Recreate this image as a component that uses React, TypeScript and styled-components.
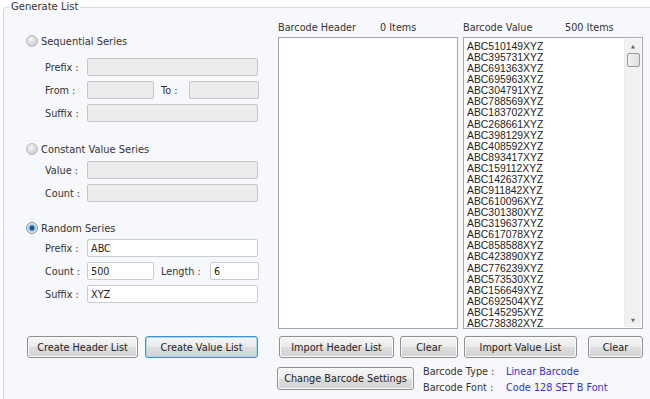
import styled, { createGlobalStyle } from 'styled-components';

const GlobalStyle = createGlobalStyle`
  html, body {
    margin: 0;
    padding: 0;
    overflow: hidden;
    background: #ffffff;
  }
  body {
    font-family: 'DejaVu Sans', Verdana, sans-serif;
    font-size: 9.7px;
    color: #333333;
  }
`;

const values = [
  'ABC510149XYZ', 'ABC395731XYZ', 'ABC691363XYZ', 'ABC695963XYZ', 'ABC304791XYZ',
  'ABC788569XYZ', 'ABC183702XYZ', 'ABC268661XYZ', 'ABC398129XYZ', 'ABC408592XYZ',
  'ABC893417XYZ', 'ABC159112XYZ', 'ABC142637XYZ', 'ABC911842XYZ', 'ABC610096XYZ',
  'ABC301380XYZ', 'ABC319637XYZ', 'ABC617078XYZ', 'ABC858588XYZ', 'ABC423890XYZ',
  'ABC776239XYZ', 'ABC573530XYZ', 'ABC156649XYZ', 'ABC692504XYZ', 'ABC145295XYZ',
  'ABC738382XYZ',
];

const App = () => {
  return (
    <>
      <GlobalStyle />
      <Frame>
        <Legend>Generate List</Legend>
        <Body>
          <LeftCol>
            <RadioRow $top={14}>
              <Radio />
              <span>Sequential Series</span>
            </RadioRow>
            <Field $top={10}>
              <FieldLabel>Prefix :</FieldLabel>
              <Input $w={172} disabled readOnly value="" />
            </Field>
            <Field $top={5}>
              <FieldLabel>From :</FieldLabel>
              <Input $w={67} disabled readOnly value="" />
              <InlineLabel $w={35}>To :</InlineLabel>
              <Input $w={70} disabled readOnly value="" />
            </Field>
            <Field $top={5}>
              <FieldLabel>Suffix :</FieldLabel>
              <Input $w={172} disabled readOnly value="" />
            </Field>

            <RadioRow $top={20}>
              <Radio />
              <span>Constant Value Series</span>
            </RadioRow>
            <Field $top={5}>
              <FieldLabel>Value :</FieldLabel>
              <Input $w={172} disabled readOnly value="" />
            </Field>
            <Field $top={5}>
              <FieldLabel>Count :</FieldLabel>
              <Input $w={172} disabled readOnly value="" />
            </Field>

            <RadioRow $top={19}>
              <Radio $checked />
              <span>Random Series</span>
            </RadioRow>
            <Field $top={4}>
              <FieldLabel>Prefix :</FieldLabel>
              <Input $w={172} readOnly value="ABC" />
            </Field>
            <Field $top={5}>
              <FieldLabel>Count :</FieldLabel>
              <Input $w={67} readOnly value="500" />
              <InlineLabel $w={56}>Length :</InlineLabel>
              <Input $w={49} readOnly value="6" />
            </Field>
            <Field $top={5}>
              <FieldLabel>Suffix :</FieldLabel>
              <Input $w={172} readOnly value="XYZ" />
            </Field>

            <ButtonRow $top={33}>
              <Btn $w={111}>Create Header List</Btn>
              <Btn $w={113} $focused>Create Value List</Btn>
            </ButtonRow>
          </LeftCol>

          <RightCol>
            <ListColumn>
              <ListHead>
                <HeadTitle>Barcode Header</HeadTitle>
                <span>0 Items</span>
              </ListHead>
              <ListBox />
              <ButtonRow $top={7}>
                <Btn $w={115}>Import Header List</Btn>
                <Btn $w={58}>Clear</Btn>
              </ButtonRow>
            </ListColumn>
            <ListColumn>
              <ListHead>
                <HeadTitle>Barcode Value</HeadTitle>
                <span>500 Items</span>
              </ListHead>
              <ListBox>
                <Items>
                  {values.map((v) => (
                    <Item key={v}>{v}</Item>
                  ))}
                </Items>
                <ScrollBar>
                  <Arrow>▲</Arrow>
                  <Thumb />
                  <Track />
                  <Arrow>▼</Arrow>
                </ScrollBar>
              </ListBox>
              <ButtonRow $top={7}>
                <Btn $w={113}>Import Value List</Btn>
                <Btn $w={55}>Clear</Btn>
              </ButtonRow>
            </ListColumn>
            <SettingsRow>
              <Btn $w={137} $h={23}>Change Barcode Settings</Btn>
              <Info>
                <InfoLine>
                  <InfoKey>Barcode Type :</InfoKey>
                  <InfoValue>Linear Barcode</InfoValue>
                </InfoLine>
                <InfoLine>
                  <InfoKey>Barcode Font :</InfoKey>
                  <InfoValue>Code 128 SET B Font</InfoValue>
                </InfoLine>
              </Info>
            </SettingsRow>
          </RightCol>
        </Body>
      </Frame>
    </>
  );
};

export default App;

const Frame = styled.fieldset`
  margin: 0 0 0 3px;
  padding: 0;
  width: 647px;
  height: 399px;
  box-sizing: border-box;
  border: 1px solid #d3dae0;
  border-right: none;
  border-bottom: none;
  border-radius: 4px 0 0 0;
  background: #f7f8fb;
`;

const Legend = styled.legend`
  margin-left: 5px;
  padding: 0 2px;
  line-height: 14px;
  font-size: 10px;
  color: #333;
`;

const Body = styled.div`
  display: grid;
  grid-template-columns: 232px 365px;
  column-gap: 20px;
  padding: 6px 0 0 22px;
`;

const LeftCol = styled.div`
  display: flex;
  flex-direction: column;
`;

const RadioRow = styled.div<{ $top: number }>`
  display: flex;
  align-items: center;
  gap: 3px;
  height: 14px;
  margin-top: ${(p) => p.$top}px;
  font-size: 9.9px;
  color: #333;
`;

const Radio = styled.span<{ $checked?: boolean }>`
  width: 12px;
  height: 12px;
  box-sizing: border-box;
  border-radius: 50%;
  border: 1px solid ${(p) => (p.$checked ? '#7f93a8' : '#b9b9b9')};
  background: ${(p) =>
    p.$checked
      ? 'radial-gradient(circle, #1d4f86 0 2px, #6fa3d2 2.5px, #c9ddef 4px, #e8eef4 5px)'
      : 'radial-gradient(circle at 40% 35%, #f4f4f4 0, #d6d6d6 60%, #c4c4c4 100%)'};
`;

const Field = styled.div<{ $top: number }>`
  display: flex;
  align-items: center;
  height: 18px;
  margin-top: ${(p) => p.$top}px;
  padding-left: 19px;
`;

const FieldLabel = styled.span`
  width: 42px;
  flex: none;
  color: #333;
`;

const InlineLabel = styled.span<{ $w: number }>`
  width: ${(p) => p.$w}px;
  flex: none;
  padding-left: 7px;
  box-sizing: border-box;
  color: #333;
`;

const Input = styled.input<{ $w: number }>`
  width: ${(p) => p.$w}px;
  height: 18px;
  box-sizing: border-box;
  margin: 0;
  padding: 0 3px;
  border: 1px solid #c9cdd2;
  border-radius: 2px;
  background: #ffffff;
  font-family: 'DejaVu Sans', Verdana, sans-serif;
  font-size: 9.7px;
  color: #222;
  outline: none;

  &:disabled {
    background: #ececec;
    border-color: #c6c6c6;
  }
`;

const ButtonRow = styled.div<{ $top: number }>`
  display: flex;
  justify-content: space-between;
  margin-top: ${(p) => p.$top}px;
  padding-left: 1px;
`;

const Btn = styled.button<{ $w: number; $h?: number; $focused?: boolean }>`
  width: ${(p) => p.$w}px;
  height: ${(p) => p.$h ?? 22}px;
  box-sizing: border-box;
  padding: 0;
  border: 1px solid ${(p) => (p.$focused ? '#3c95c8' : '#8f8f8f')};
  box-shadow: ${(p) => (p.$focused ? 'inset 0 0 0 1px #a9d6ef' : 'inset 0 0 0 1px #fafafa')};
  border-radius: 3px;
  background: linear-gradient(#f6f6f6, #ebebeb 50%, #dddddd 51%, #d3d3d3);
  font-family: 'DejaVu Sans', Verdana, sans-serif;
  font-size: 9.7px;
  color: #222;
`;

const RightCol = styled.div`
  display: grid;
  grid-template-columns: 180px 180px;
  column-gap: 5px;
  align-content: start;
`;

const ListColumn = styled.div`
  display: flex;
  flex-direction: column;
`;

const ListHead = styled.div`
  display: flex;
  align-items: center;
  height: 14px;
  color: #333;
`;

const HeadTitle = styled.span`
  width: 102px;
`;

const ListBox = styled.div`
  display: flex;
  height: 292px;
  margin-top: 3px;
  box-sizing: border-box;
  border: 1px solid #a3a7ab;
  background: #ffffff;
  overflow: hidden;
`;

const Items = styled.div`
  flex: 1;
  padding: 3px 0 0 3px;
`;

const Item = styled.div`
  font-family: 'Liberation Sans', Arial, sans-serif;
  font-size: 10.4px;
  line-height: 11.08px;
  height: 11.08px;
  color: #222;
`;

const ScrollBar = styled.div`
  width: 16px;
  margin: 1px 1px 1px 0;
  display: flex;
  flex-direction: column;
  align-items: center;
  background: #f1f1f1;
  border-left: 1px solid #ececec;
`;

const Arrow = styled.div`
  height: 14px;
  line-height: 14px;
  font-size: 5px;
  color: #666;
`;

const Thumb = styled.div`
  width: 13px;
  height: 14px;
  box-sizing: border-box;
  border: 1px solid #9a9a9a;
  border-radius: 2px;
  background: linear-gradient(90deg, #f2f2f2, #e0e0e0);
`;

const Track = styled.div`
  flex: 1;
`;

const SettingsRow = styled.div`
  grid-column: 1 / span 2;
  display: flex;
  margin-top: 9px;
  margin-left: -1px;
`;

const Info = styled.div`
  display: flex;
  flex-direction: column;
  margin-left: 9px;
  margin-top: -4px;
`;

const InfoLine = styled.div`
  display: flex;
  height: 16px;
  align-items: center;
`;

const InfoKey = styled.span`
  width: 83px;
  color: #333;
`;

const InfoValue = styled.span`
  color: #3232c4;
`;
